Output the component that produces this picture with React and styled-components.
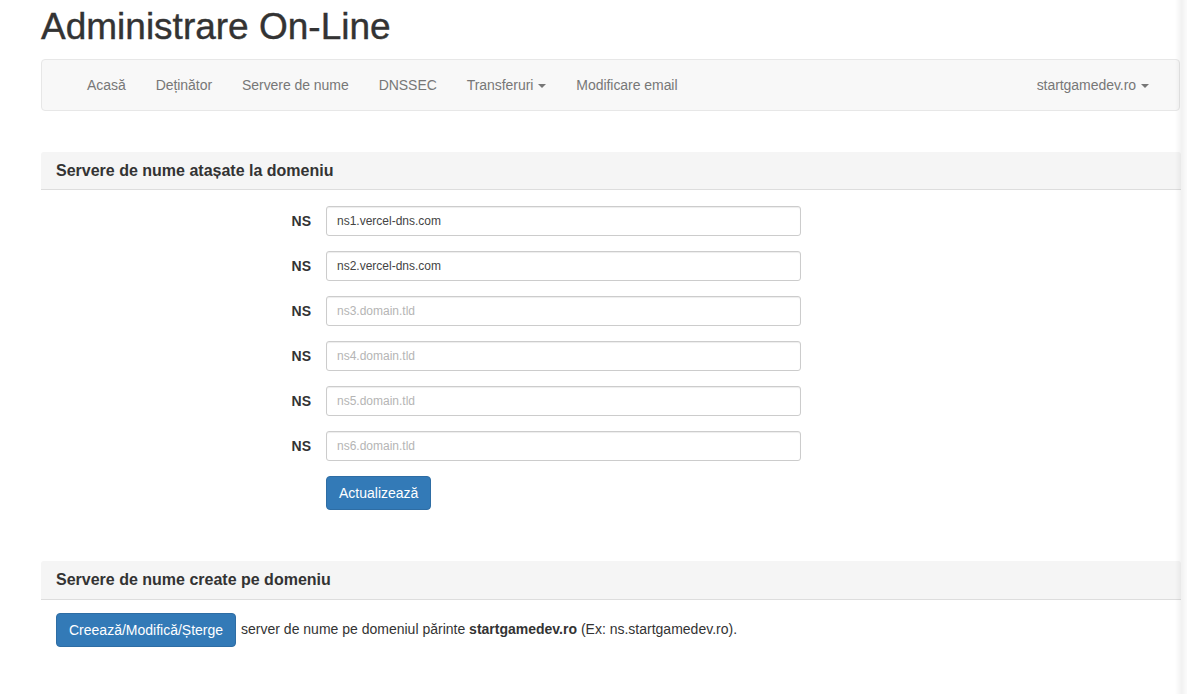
import React from 'react';
import styled, { createGlobalStyle } from 'styled-components';

const GlobalStyle = createGlobalStyle`
  html, body {
    margin: 0;
    padding: 0;
    background: #fff;
  }
  body {
    font-family: 'Liberation Sans', Arial, Helvetica, sans-serif;
    font-size: 14px;
    line-height: 1.42857;
    color: #333;
  }
  * {
    box-sizing: border-box;
  }
`;

const Page = styled.div`
  padding: 0 6px 40px 41px;
`;

const Title = styled.h1`
  margin: 7px 0 11px;
  font-size: 37px;
  font-weight: 500;
  line-height: 1.1;
  color: #333;
  -webkit-text-stroke: 0.4px #333;
`;

const Navbar = styled.nav`
  display: flex;
  align-items: center;
  justify-content: space-between;
  height: 52px;
  margin-right: 1px;
  padding: 0 15px 0 30px;
  background: #f8f8f8;
  border: 1px solid #e7e7e7;
  border-radius: 4px;
  margin-bottom: 41px;
`;

const NavList = styled.ul`
  display: flex;
  margin: 0;
  padding: 0;
  list-style: none;
`;

const NavItem = styled.li`
  padding: 15px;
  line-height: 20px;
  color: #777;
  letter-spacing: -0.05px;
  white-space: nowrap;
`;

const Caret = styled.span`
  display: inline-block;
  width: 0;
  height: 0;
  margin-left: 5px;
  vertical-align: middle;
  border-top: 4px solid #777;
  border-right: 4px solid transparent;
  border-left: 4px solid transparent;
`;

const Panel = styled.section`
  margin-bottom: ${(p) => p.$gap || 0}px;
`;

const PanelHeading = styled.div`
  padding: 10px 15px;
  background: #f5f5f5;
  border-bottom: 1px solid #ddd;
  border-top-left-radius: 3px;
  border-top-right-radius: 3px;
`;

const PanelTitle = styled.h3`
  margin: 0;
  font-size: 16px;
  font-weight: 700;
  line-height: 1.1;
  color: #333;
`;

const PanelBody = styled.div`
  padding: ${(p) => p.$top || 15}px 15px 15px;
`;

const FormGrid = styled.div`
  display: grid;
  grid-template-columns: 255px 475px;
  column-gap: 15px;
  row-gap: 15px;
  align-items: center;
`;

const Label = styled.label`
  text-align: right;
  font-weight: 700;
  font-size: 14px;
  padding-top: 2px;
`;

const Input = styled.input`
  display: block;
  width: 100%;
  height: 30px;
  padding: 5px 10px;
  font-family: inherit;
  font-size: 12px;
  line-height: 1.5;
  color: #444;
  background: #fff;
  border: 1px solid #ccc;
  border-radius: 3px;
  box-shadow: inset 0 1px 1px rgba(0, 0, 0, 0.075);
  outline: none;

  &::placeholder {
    color: #b5b5b5;
  }
`;

const Button = styled.button`
  display: inline-block;
  padding: 6px 12px;
  font-family: inherit;
  font-size: 14px;
  line-height: 20px;
  color: #fff;
  background: #337ab7;
  border: 1px solid #2e6da4;
  border-radius: 4px;
  white-space: nowrap;
  vertical-align: middle;
  cursor: pointer;
`;

const ButtonCell = styled.div`
  grid-column: 2;
`;

const InfoLine = styled.div`
  display: flex;
  align-items: center;
  gap: 5px;
  color: #333;
`;

const EdgeShade = styled.div`
  position: fixed;
  top: 0;
  right: 0;
  width: 12px;
  height: 100%;
  pointer-events: none;
  background: linear-gradient(to right, rgba(0, 0, 0, 0), rgba(0, 0, 0, 0.05) 55%, rgba(0, 0, 0, 0.015));
`;

const navLeft = [
  { label: 'Acasă' },
  { label: 'Deținător' },
  { label: 'Servere de nume' },
  { label: 'DNSSEC' },
  { label: 'Transferuri', dropdown: true },
  { label: 'Modificare email' },
];

const servers = [
  { value: 'ns1.vercel-dns.com', placeholder: 'ns1.domain.tld' },
  { value: 'ns2.vercel-dns.com', placeholder: 'ns2.domain.tld' },
  { value: '', placeholder: 'ns3.domain.tld' },
  { value: '', placeholder: 'ns4.domain.tld' },
  { value: '', placeholder: 'ns5.domain.tld' },
  { value: '', placeholder: 'ns6.domain.tld' },
];

const App = () => {
  return (
    <>
      <GlobalStyle />
      <Page>
        <Title>Administrare On-Line</Title>

        <Navbar>
          <NavList>
            {navLeft.map((item) => (
              <NavItem key={item.label}>
                {item.label}
                {item.dropdown && <Caret />}
              </NavItem>
            ))}
          </NavList>
          <NavList>
            <NavItem>
              startgamedev.ro
              <Caret />
            </NavItem>
          </NavList>
        </Navbar>

        <Panel $gap={36}>
          <PanelHeading>
            <PanelTitle>Servere de nume atașate la domeniu</PanelTitle>
          </PanelHeading>
          <PanelBody $top={16}>
            <FormGrid>
              {servers.map((s, index) => (
                <React.Fragment key={index}>
                  <Label>NS</Label>
                  <Input type='text' defaultValue={s.value} placeholder={s.placeholder} />
                </React.Fragment>
              ))}
              <ButtonCell>
                <Button>Actualizează</Button>
              </ButtonCell>
            </FormGrid>
          </PanelBody>
        </Panel>

        <Panel>
          <PanelHeading>
            <PanelTitle>Servere de nume create pe domeniu</PanelTitle>
          </PanelHeading>
          <PanelBody $top={13}>
            <InfoLine>
              <Button>Creează/Modifică/Șterge</Button>
              <span>
                server de nume pe domeniul părinte <strong>startgamedev.ro</strong> (Ex: ns.startgamedev.ro).
              </span>
            </InfoLine>
          </PanelBody>
        </Panel>
      </Page>
      <EdgeShade />
    </>
  );
};

export default App;
